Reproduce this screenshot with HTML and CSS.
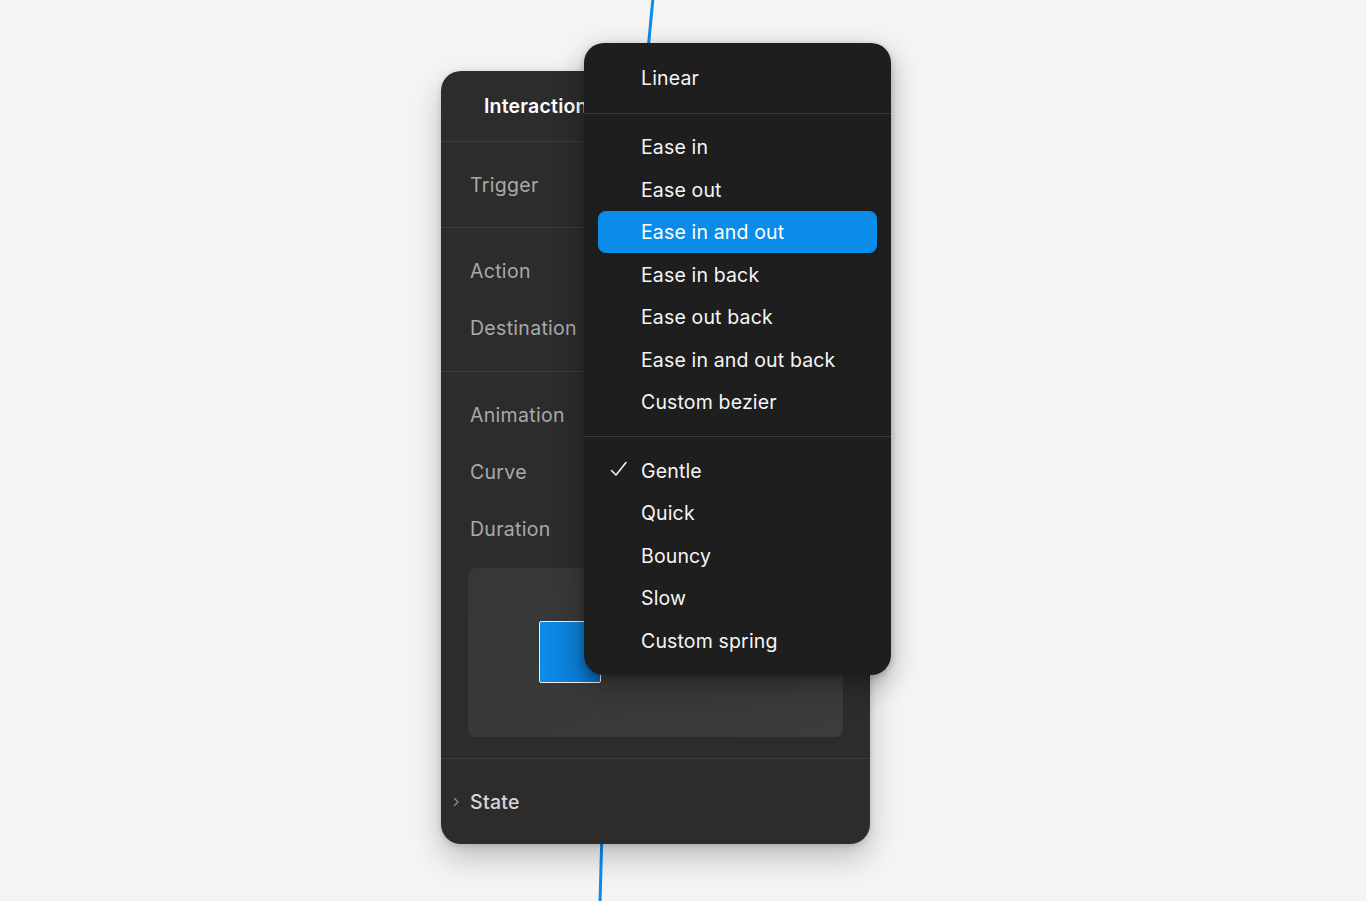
FILE: index.html
```html
<!DOCTYPE html>
<html>
<head>
<meta charset="utf-8">
<link rel="stylesheet" href="styles.css">
</head>
<body>
<div class="stage">
  <svg class="wire" width="1366" height="901" viewBox="0 0 1366 901">
    <path d="M653 -2 L648 50" stroke="#0c8ce9" stroke-width="3" fill="none"/>
    <path d="M602 830 L600 903" stroke="#0c8ce9" stroke-width="3" fill="none"/>
  </svg>

  <div class="panel">
    <div class="panel-head">Interaction</div>
    <div class="section sec-trigger">
      <div class="row">Trigger</div>
    </div>
    <div class="section sec-action">
      <div class="row">Action</div>
      <div class="row">Destination</div>
    </div>
    <div class="section sec-anim">
      <div class="row">Animation</div>
      <div class="row">Curve</div>
      <div class="row">Duration</div>
      <div class="preview">
        <div class="preview-box"></div>
      </div>
    </div>
    <div class="section sec-state">
      <svg class="chev" width="8" height="12" viewBox="0 0 8 12"><path d="M2.5 2.5 L6 6 L2.5 9.5" stroke="#8a8a8a" stroke-width="1.4" fill="none" stroke-linecap="round" stroke-linejoin="round"/></svg>
      <span class="state-label">State</span>
    </div>
  </div>

  <div class="menu">
    <div class="group">
      <div class="item">Linear</div>
    </div>
    <div class="sep"></div>
    <div class="group">
      <div class="item">Ease in</div>
      <div class="item">Ease out</div>
      <div class="item active">Ease in and out</div>
      <div class="item">Ease in back</div>
      <div class="item">Ease out back</div>
      <div class="item">Ease in and out back</div>
      <div class="item">Custom bezier</div>
    </div>
    <div class="sep"></div>
    <div class="group">
      <div class="item checked"><svg class="check" width="18" height="18" viewBox="0 0 18 18"><path d="M1.5 9.5 L6 14 L16 1.5" stroke="#f2f2f2" stroke-width="1.6" fill="none" stroke-linecap="round" stroke-linejoin="round"/></svg>Gentle</div>
      <div class="item">Quick</div>
      <div class="item">Bouncy</div>
      <div class="item">Slow</div>
      <div class="item">Custom spring</div>
    </div>
  </div>
</div>
</body>
</html>
```

FILE: styles.css
```css
html, body {
  margin: 0;
  padding: 0;
  background: #f4f4f4;
}
body {
  font-family: Inter, "Noto Sans", "Liberation Sans", sans-serif;
  -webkit-font-smoothing: antialiased;
}
.stage {
  position: relative;
  width: 1366px;
  height: 901px;
  overflow: hidden;
}
.wire {
  position: absolute;
  left: 0;
  top: 0;
}
.panel {
  position: absolute;
  left: 441px;
  top: 71px;
  width: 429px;
  height: 773px;
  background: #2c2c2c;
  border-radius: 20px;
  box-shadow: 0 14px 30px rgba(0,0,0,0.22), 0 2px 6px rgba(0,0,0,0.15);
  display: flex;
  flex-direction: column;
  overflow: hidden;
}
.panel-head {
  height: 70px;
  display: flex;
  align-items: center;
  padding-left: 43px;
  color: #ffffff;
  font-size: 19.5px;
  letter-spacing: 0.2px;
  font-weight: 600;
  border-bottom: 1px solid #3d3d3d;
}
.section {
  border-bottom: 1px solid #3d3d3d;
  padding: 14px 0;
  display: flex;
  flex-direction: column;
}
.sec-action { padding-bottom: 15px; }
.sec-anim { padding-bottom: 21px; }
.row {
  height: 57px;
  display: flex;
  align-items: center;
  padding-left: 29px;
  color: #a9a9a9;
  font-size: 19.5px;
  letter-spacing: 0.3px;
}
.preview {
  margin: 11px 27px 0 27px;
  height: 169px;
  border-radius: 8px;
  background: linear-gradient(160deg, #373737 0%, #393939 60%, #3c3c3c 100%);
  position: relative;
}
.preview-box {
  position: absolute;
  left: 71px;
  top: 53px;
  width: 60px;
  height: 60px;
  border: 1.5px solid #ededed;
  border-radius: 2px;
  background: linear-gradient(90deg, #0c8ce9 0%, #0a7fd6 60%, #0666b8 100%);
}
.sec-state {
  border-bottom: none;
  flex-direction: row;
  align-items: center;
  height: 85px;
  padding: 0;
  box-sizing: border-box;
}
.chev {
  margin-left: 11px;
  margin-right: 10px;
}
.state-label {
  color: #d6d6d6;
  font-size: 19.5px;
  letter-spacing: 0.3px;
  font-weight: 500;
}

.menu {
  position: absolute;
  left: 584px;
  top: 43px;
  width: 307px;
  height: 632px;
  box-sizing: border-box;
  background: #1e1e1e;
  border-radius: 20px;
  box-shadow: 0 10px 28px rgba(0,0,0,0.3), 0 2px 6px rgba(0,0,0,0.2);
  padding: 14px 0 13px 0;
  display: flex;
  flex-direction: column;
}
.group {
  padding: 0 14px;
  display: flex;
  flex-direction: column;
}
.sep {
  height: 1px;
  background: #3b3b3b;
  margin: 13px 0 12.5px 0;
}
.item {
  height: 42.5px;
  display: flex;
  align-items: center;
  padding-left: 43px;
  color: #f5f5f5;
  font-size: 19.5px;
  letter-spacing: 0.15px;
  border-radius: 8px;
  position: relative;
}
.item.active {
  background: #0c8ce9;
  color: #ffffff;
}
.check {
  position: absolute;
  left: 12px;
  top: 11px;
}
```
